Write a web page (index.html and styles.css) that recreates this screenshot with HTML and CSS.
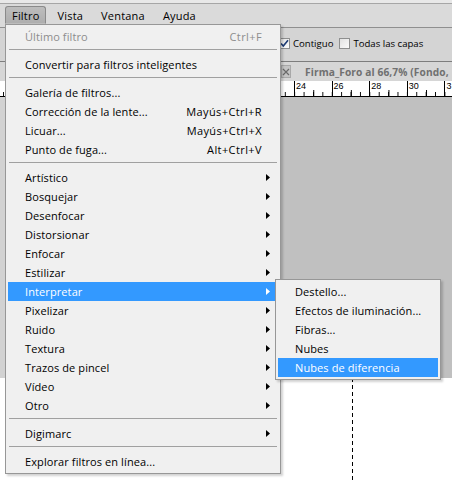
FILE: index.html
```html
<!DOCTYPE html>
<html lang="es">
<head>
<meta charset="utf-8">
<title>Filtro</title>
<link rel="stylesheet" href="styles.css">
</head>
<body>
<div class="app">
  <div class="topline"></div>

  <nav class="menubar">
    <span class="mb-item active">Filtro</span>
    <span class="mb-item">Vista</span>
    <span class="mb-item">Ventana</span>
    <span class="mb-item">Ayuda</span>
  </nav>

  <div class="options">
    <label class="chk">
      <span class="box"><svg width="9" height="9" viewBox="0 0 9 9"><path d="M1 4.5 L3.3 7 L8 1.2" fill="none" stroke="#1c3b74" stroke-width="1.6"/></svg></span>
      Contiguo
    </label>
    <label class="chk">
      <span class="box"></span>
      Todas las capas
    </label>
  </div>

  <div class="tabs">
    <span class="tab-close"><svg width="8" height="8" viewBox="0 0 8 8"><path d="M1 1 L7 7 M7 1 L1 7" stroke="#6a6a6a" stroke-width="1.2"/></svg></span>
    <span class="tab-title">Firma_Foro al 66,7% (Fondo,</span>
  </div>

  <div class="ruler">
    <span class="rnum">24</span>
    <span class="rnum">26</span>
    <span class="rnum">28</span>
    <span class="rnum">30</span>
    <span class="rnum">3</span>
  </div>

  <div class="pasteboard"></div>
  <div class="image"><div class="marquee"></div></div>

  <!-- Filtro dropdown -->
  <div class="menu">
    <div class="mi disabled"><span class="label">Último filtro</span><span class="kbd">Ctrl+F</span></div>
    <div class="sep"></div>
    <div class="mi"><span class="label">Convertir para filtros inteligentes</span></div>
    <div class="sep"></div>
    <div class="mi"><span class="label">Galería de filtros...</span></div>
    <div class="mi"><span class="label">Corrección de la lente...</span><span class="kbd">Mayús+Ctrl+R</span></div>
    <div class="mi"><span class="label">Licuar...</span><span class="kbd">Mayús+Ctrl+X</span></div>
    <div class="mi"><span class="label">Punto de fuga...</span><span class="kbd">Alt+Ctrl+V</span></div>
    <div class="sep"></div>
    <div class="mi"><span class="label">Artístico</span><svg class="arrow" width="4" height="7" viewBox="0 0 4 7"><path d="M0 0 L4 3.5 L0 7 Z"/></svg></div>
    <div class="mi"><span class="label">Bosquejar</span><svg class="arrow" width="4" height="7" viewBox="0 0 4 7"><path d="M0 0 L4 3.5 L0 7 Z"/></svg></div>
    <div class="mi"><span class="label">Desenfocar</span><svg class="arrow" width="4" height="7" viewBox="0 0 4 7"><path d="M0 0 L4 3.5 L0 7 Z"/></svg></div>
    <div class="mi"><span class="label">Distorsionar</span><svg class="arrow" width="4" height="7" viewBox="0 0 4 7"><path d="M0 0 L4 3.5 L0 7 Z"/></svg></div>
    <div class="mi"><span class="label">Enfocar</span><svg class="arrow" width="4" height="7" viewBox="0 0 4 7"><path d="M0 0 L4 3.5 L0 7 Z"/></svg></div>
    <div class="mi"><span class="label">Estilizar</span><svg class="arrow" width="4" height="7" viewBox="0 0 4 7"><path d="M0 0 L4 3.5 L0 7 Z"/></svg></div>
    <div class="mi hl"><span class="label">Interpretar</span><svg class="arrow" width="4" height="7" viewBox="0 0 4 7"><path d="M0 0 L4 3.5 L0 7 Z"/></svg></div>
    <div class="mi"><span class="label">Pixelizar</span><svg class="arrow" width="4" height="7" viewBox="0 0 4 7"><path d="M0 0 L4 3.5 L0 7 Z"/></svg></div>
    <div class="mi"><span class="label">Ruido</span><svg class="arrow" width="4" height="7" viewBox="0 0 4 7"><path d="M0 0 L4 3.5 L0 7 Z"/></svg></div>
    <div class="mi"><span class="label">Textura</span><svg class="arrow" width="4" height="7" viewBox="0 0 4 7"><path d="M0 0 L4 3.5 L0 7 Z"/></svg></div>
    <div class="mi"><span class="label">Trazos de pincel</span><svg class="arrow" width="4" height="7" viewBox="0 0 4 7"><path d="M0 0 L4 3.5 L0 7 Z"/></svg></div>
    <div class="mi"><span class="label">Vídeo</span><svg class="arrow" width="4" height="7" viewBox="0 0 4 7"><path d="M0 0 L4 3.5 L0 7 Z"/></svg></div>
    <div class="mi"><span class="label">Otro</span><svg class="arrow" width="4" height="7" viewBox="0 0 4 7"><path d="M0 0 L4 3.5 L0 7 Z"/></svg></div>
    <div class="sep"></div>
    <div class="mi"><span class="label">Digimarc</span><svg class="arrow" width="4" height="7" viewBox="0 0 4 7"><path d="M0 0 L4 3.5 L0 7 Z"/></svg></div>
    <div class="sep"></div>
    <div class="mi"><span class="label">Explorar filtros en línea...</span></div>
  </div>

  <!-- Interpretar submenu -->
  <div class="submenu">
    <div class="mi"><span class="label">Destello...</span></div>
    <div class="mi"><span class="label">Efectos de iluminación...</span></div>
    <div class="mi"><span class="label">Fibras...</span></div>
    <div class="mi"><span class="label">Nubes</span></div>
    <div class="mi hl"><span class="label">Nubes de diferencia</span></div>
  </div>
</div>
</body>
</html>
```

FILE: styles.css
```css
* { box-sizing: border-box; }

html, body {
  margin: 0;
  padding: 0;
  background: #ffffff;
}

.app {
  position: relative;
  width: 452px;
  height: 480px;
  overflow: hidden;
  font-family: "Open Sans", "Noto Sans", sans-serif;
  font-size: 11px;
  letter-spacing: 0.1px;
  color: #000;
}

/* window chrome strip above the menu bar */
.topline {
  height: 4px;
  background: #e8e8e8;
  border-bottom: 1px solid #a6a6a6;
}

/* application menu bar */
.menubar {
  height: 24px;
  background: #dadada;
  border-bottom: 1px solid #8f8f8f;
  display: flex;
  align-items: flex-start;
  padding-left: 5px;
}

.mb-item {
  height: 18px;
  margin-top: 2px;
  margin-right: 4px;
  padding: 0 6px;
  line-height: 17px;
  border: 1px solid transparent;
  font-size: 11px;
  letter-spacing: 0.2px;
}

.mb-item.active {
  background: linear-gradient(#bdbdbd, #aeaeae);
  border-color: #8a8a8a;
  border-bottom-color: transparent;
  border-radius: 3px 3px 0 0;
}

/* tool options bar */
.options {
  height: 34px;
  background: #d4d4d4;
  border-bottom: 1px solid #7d7d7d;
  display: flex;
  align-items: center;
  padding: 0 0 2px 279px;
  gap: 6px;
  font-size: 9.6px;
  letter-spacing: 0;
}

.chk {
  display: flex;
  align-items: center;
  gap: 2px;
}

.box {
  width: 11px;
  height: 11px;
  border: 1px solid #8e8f8f;
  background: linear-gradient(135deg, #e2e2e2, #fbfbfb);
  display: flex;
  align-items: center;
  justify-content: center;
  margin-right: 1px;
}

/* document tabs */
.tabs {
  height: 19px;
  background: #d6d6d6;
  display: flex;
  align-items: center;
  padding-left: 281px;
  white-space: nowrap;
  overflow: hidden;
}

.tab-close {
  width: 10px;
  height: 13px;
  background: #c4c4c4;
  border: 1px solid #a8a8a8;
  display: flex;
  align-items: center;
  justify-content: center;
  flex: none;
}

.tab-title {
  margin-left: 14px;
  font-weight: 700;
  color: #707070;
  font-size: 10.2px;
  letter-spacing: 0.1px;
}

/* horizontal ruler */
.ruler {
  height: 16px;
  background:
    linear-gradient(to right, #000 1px, transparent 1px) 12.5px 100% / 37.6px 6px repeat-x,
    linear-gradient(to right, #000 1px, transparent 1px) 3.1px 100% / 9.4px 4px repeat-x,
    #fff;
  border-bottom: 1px solid #000;
  display: flex;
  padding-left: 294px;
  white-space: nowrap;
  overflow: hidden;
}

.rnum {
  flex: none;
  width: 37.6px;
  border-left: 1px solid #000;
  padding-left: 1px;
  font-family: "Liberation Sans", sans-serif;
  font-size: 9px;
  letter-spacing: 0;
  line-height: 10px;
}

/* work area */
.pasteboard {
  height: 281px;
  background: #c0c0c0;
  border-left: 5px solid #d2d2d2;
}

.image {
  height: 102px;
  background: #fff;
  padding-left: 352px;
}

.marquee {
  width: 1px;
  height: 100%;
  background: repeating-linear-gradient(to bottom, #000 0 4px, transparent 4px 7px);
}

/* dropdown menus */
.menu,
.submenu {
  position: absolute;
  background: #f0f0f0;
  border: 1px solid #979797;
  box-shadow: 2px 2px 2px rgba(0, 0, 0, 0.18);
}

.menu {
  left: 5px;
  top: 24px;
  width: 276px;
  padding: 2px 5px 2px 2px;
}

.submenu {
  left: 275px;
  top: 279px;
  width: 166px;
  padding: 2px;
}

.mi {
  height: 19px;
  display: flex;
  align-items: center;
  padding: 0 5px 0 17px;
  white-space: nowrap;
}

.mi .label { flex: 1; }

.mi .kbd {
  margin-right: 8px;
  letter-spacing: 0.4px;
}

.mi .arrow { flex: none; fill: #000; }

.mi.disabled { color: #8d8d8d; }

.mi.hl {
  background: #3399ff;
  color: #fff;
}

.mi.hl .arrow { fill: #fff; }

.sep {
  height: 1px;
  margin: 3px -2px 5px 1px;
  background: #a0a0a0;
}
```
